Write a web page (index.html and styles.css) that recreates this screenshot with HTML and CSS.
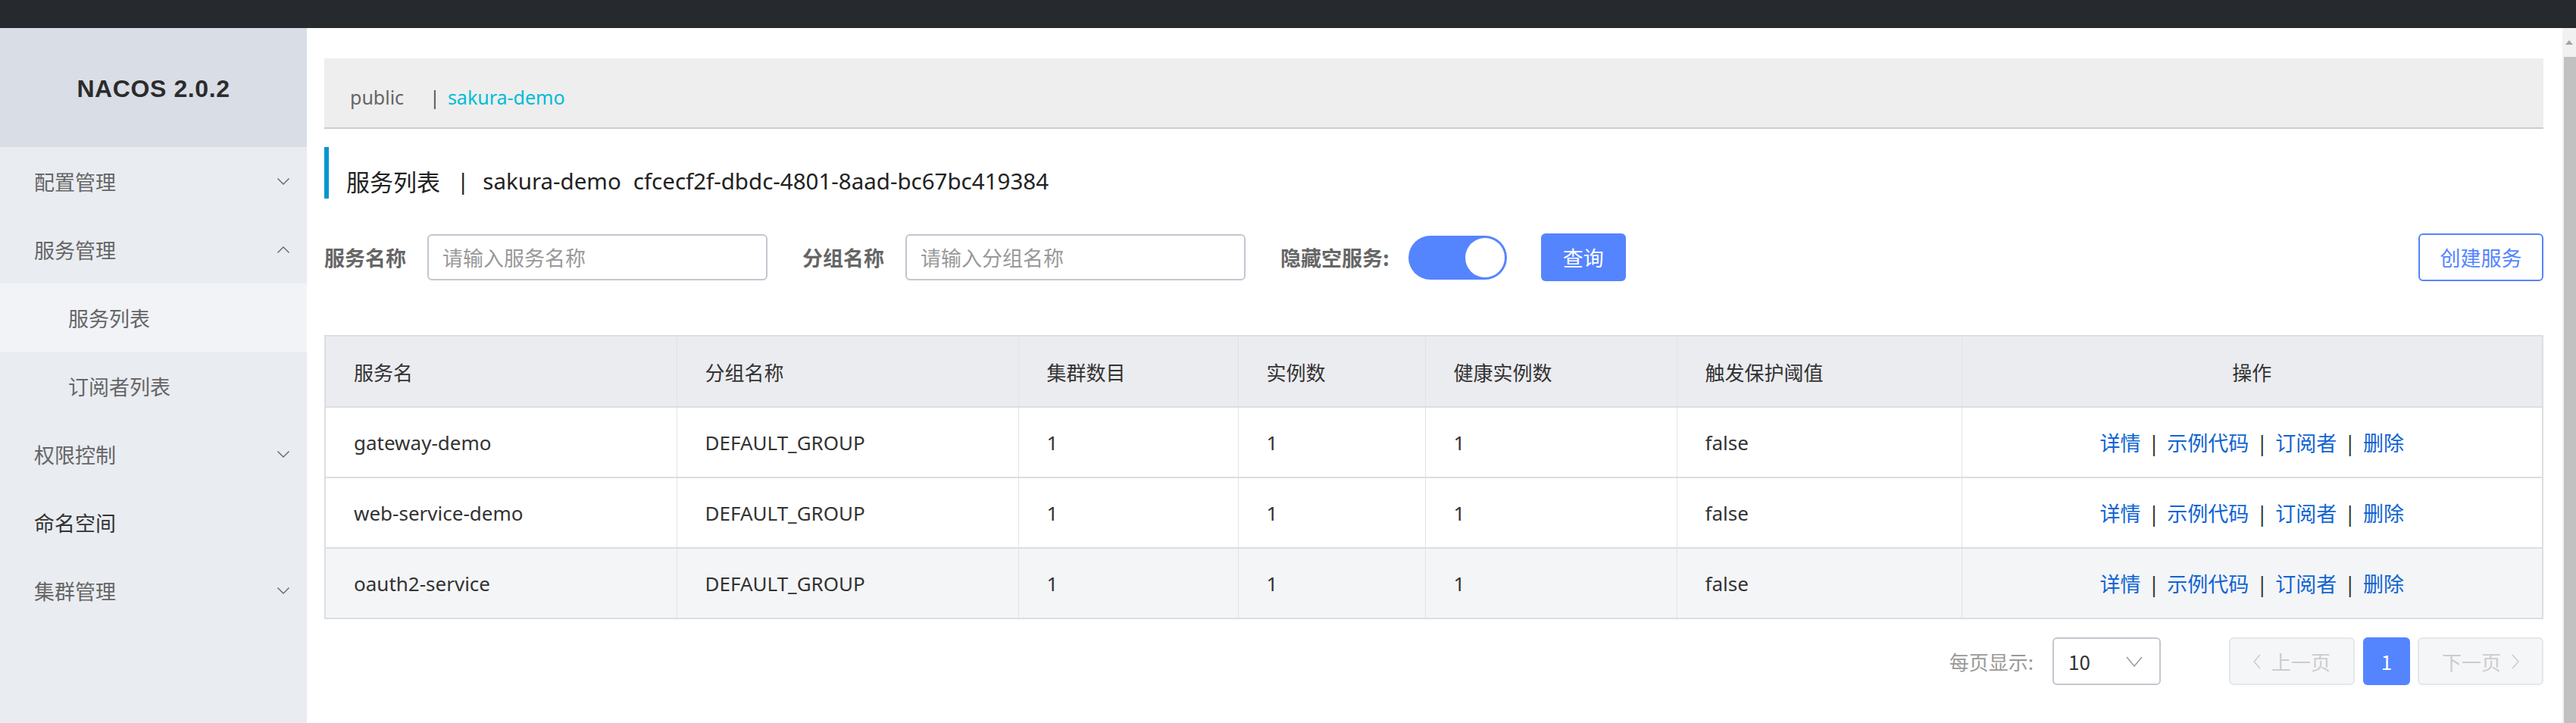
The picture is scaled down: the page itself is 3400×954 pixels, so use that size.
FILE: index.html
```html
<!DOCTYPE html>
<html lang="zh-CN">
<head>
<meta charset="utf-8">
<title>Nacos</title>
<link rel="stylesheet" href="styles.css">
</head>
<body>
<div class="topbar"></div>
<div class="app">
  <aside class="sidebar">
    <div class="brand">NACOS 2.0.2</div>
    <ul class="menu">
      <li class="menu-item"><span>配置管理</span><svg class="chev" viewBox="0 0 16 9" width="16" height="9"><polyline points="0.5,0.5 8,8 15.5,0.5"/></svg></li>
      <li class="menu-item"><span>服务管理</span><svg class="chev" viewBox="0 0 16 9" width="16" height="9"><polyline points="0.5,8.5 8,1 15.5,8.5"/></svg></li>
      <li class="sub-item active">服务列表</li>
      <li class="sub-item">订阅者列表</li>
      <li class="menu-item"><span>权限控制</span><svg class="chev" viewBox="0 0 16 9" width="16" height="9"><polyline points="0.5,0.5 8,8 15.5,0.5"/></svg></li>
      <li class="menu-item strong"><span>命名空间</span></li>
      <li class="menu-item"><span>集群管理</span><svg class="chev" viewBox="0 0 16 9" width="16" height="9"><polyline points="0.5,0.5 8,8 15.5,0.5"/></svg></li>
    </ul>
  </aside>
  <main class="main">
    <div class="ns-bar">
      <span class="ns">public</span>
      <span class="ns-sep">|</span>
      <span class="ns ns-active">sakura-demo</span>
    </div>
    <div class="page-title">
      <span class="title-cjk">服务列表</span><span class="title-sep">|</span><span>sakura-demo</span><span class="title-id">cfcecf2f-dbdc-4801-8aad-bc67bc419384</span>
    </div>
    <div class="filters">
      <span class="f-label">服务名称</span>
      <div class="f-input">请输入服务名称</div>
      <span class="f-label">分组名称</span>
      <div class="f-input">请输入分组名称</div>
      <span class="f-label f-label-switch">隐藏空服务:</span>
      <div class="switch"><div class="knob"></div></div>
      <button class="btn btn-primary">查询</button>
      <button class="btn btn-outline">创建服务</button>
    </div>
    <table class="grid">
      <colgroup>
        <col style="width:464px"><col style="width:451px"><col style="width:290px"><col style="width:247px"><col style="width:332px"><col style="width:376px"><col>
      </colgroup>
      <thead>
        <tr><th>服务名</th><th>分组名称</th><th>集群数目</th><th>实例数</th><th>健康实例数</th><th>触发保护阈值</th><th class="center">操作</th></tr>
      </thead>
      <tbody>
        <tr><td>gateway-demo</td><td>DEFAULT_GROUP</td><td>1</td><td>1</td><td>1</td><td>false</td><td class="center ops"><a>详情</a><span class="op-sep">|</span><a>示例代码</a><span class="op-sep">|</span><a>订阅者</a><span class="op-sep">|</span><a>删除</a></td></tr>
        <tr><td>web-service-demo</td><td>DEFAULT_GROUP</td><td>1</td><td>1</td><td>1</td><td>false</td><td class="center ops"><a>详情</a><span class="op-sep">|</span><a>示例代码</a><span class="op-sep">|</span><a>订阅者</a><span class="op-sep">|</span><a>删除</a></td></tr>
        <tr class="hover"><td>oauth2-service</td><td>DEFAULT_GROUP</td><td>1</td><td>1</td><td>1</td><td>false</td><td class="center ops"><a>详情</a><span class="op-sep">|</span><a>示例代码</a><span class="op-sep">|</span><a>订阅者</a><span class="op-sep">|</span><a>删除</a></td></tr>
      </tbody>
    </table>
    <div class="pager">
      <span class="p-label">每页显示:</span>
      <div class="p-select"><span>10</span><svg class="p-chev" viewBox="0 0 22 14" width="22" height="14"><polyline points="1,1 11,13 21,1"/></svg></div>
      <div class="p-btn p-disabled"><svg viewBox="0 0 10 20" width="10" height="20"><polyline points="9,1 1,10 9,19"/></svg><span>上一页</span></div>
      <div class="p-num">1</div>
      <div class="p-btn p-disabled p-next"><span>下一页</span><svg viewBox="0 0 10 20" width="10" height="20"><polyline points="1,1 9,10 1,19"/></svg></div>
    </div>
  </main>
  <div class="scrollbar">
    <div class="sb-arrow"><svg viewBox="0 0 10 6" width="10" height="6"><polygon points="0,6 5,0 10,6"/></svg></div>
    <div class="sb-thumb"></div>
  </div>
</div>
</body>
</html>
```
FILE: styles.css
```css
* { box-sizing: border-box; }
html, body { margin: 0; padding: 0; }
body {
  width: 3400px;
  height: 954px;
  overflow: hidden;
  font-family: "Noto Sans", "Noto Sans CJK SC", sans-serif;
  color: #333;
  background: #fff;
}
.topbar { height: 37px; background: #262a2f; }
.app { display: flex; height: 917px; }

/* sidebar */
.sidebar { width: 405px; flex: none; background: #e9ecf1; }
.brand {
  height: 157px;
  background: #d9dde5;
  display: flex;
  align-items: center;
  justify-content: center;
  font-family: "Liberation Sans", Arial, sans-serif;
  font-weight: bold;
  font-size: 32px;
  letter-spacing: 0.6px;
  color: #2b2b2b;
  padding-top: 3px;
}
.menu { list-style: none; margin: 0; padding: 0; }
.menu-item, .sub-item {
  height: 90px;
  display: flex;
  align-items: center;
  justify-content: space-between;
  font-size: 27px;
  color: #666;
  font-family: "Noto Sans CJK SC", sans-serif;
}
.menu-item { padding: 0 23px 0 45px; }
.menu-item.strong { color: #333; }
.sub-item { padding-left: 90px; }
.sub-item.active { background: #f1f3f7; }
.chev { fill: none; stroke: #666; stroke-width: 1.4; }

/* main */
.main { flex: 1; padding: 40px 25px 0 23px; min-width: 0; }
.ns-bar {
  height: 93px;
  background: #eee;
  border-bottom: 2px solid #cdcdcd;
  display: flex;
  align-items: center;
  padding: 10px 0 0 34px;
  font-size: 25px;
  color: #666;
}
.ns-sep { margin: 0 10px 0 34px; color: #555; }
.ns-active { color: #00bcd8; }

.page-title {
  margin-top: 24px;
  height: 68px;
  border-left: 6px solid #0096d0;
  display: flex;
  align-items: center;
  padding: 20px 0 0 23px;
  font-size: 29.5px;
  color: #222;
  font-family: "Noto Sans", "Noto Sans CJK SC", sans-serif;
}
.title-cjk { font-size: 31px; font-family: "Noto Sans CJK SC", sans-serif; }
.title-sep { margin: 0 18px 0 22px; }
.title-id { margin-left: 16px; }

.filters {
  margin-top: 46px;
  height: 63px;
  display: flex;
  align-items: center;
}
.f-label {
  font-family: "Noto Sans CJK SC", sans-serif;
  font-size: 27px;
  font-weight: bold;
  color: #666;
  margin-right: 28px;
}
.f-label-switch { margin-right: 25px; }
.f-input {
  width: 449px;
  height: 61px;
  border: 2px solid #c4c6cf;
  border-radius: 6px;
  padding-left: 18px;
  display: flex;
  align-items: center;
  font-size: 27px;
  color: #999;
  font-family: "Noto Sans CJK SC", sans-serif;
  margin-right: 46px;
}
.switch {
  width: 130px;
  height: 58px;
  border-radius: 29px;
  background: #5584ff;
  display: flex;
  align-items: center;
  justify-content: flex-end;
  padding-right: 3px;
  margin-right: 45px;
}
.knob { width: 52px; height: 52px; border-radius: 50%; background: #fff; }
.btn {
  height: 63px;
  border-radius: 6px;
  font-family: "Noto Sans CJK SC", sans-serif;
  font-size: 27px;
  padding: 0;
  cursor: pointer;
}
.btn-primary { width: 112px; background: #5584ff; border: 0; color: #fff; }
.btn-outline { width: 165px; margin-left: auto; background: #fff; border: 2px solid #5584ff; color: #5584ff; }

/* table */
.grid {
  margin-top: 71px;
  width: 100%;
  table-layout: fixed;
  border-collapse: collapse;
  border: 2px solid #dcdee3;
  font-size: 26px;
}
.grid th, .grid td {
  text-align: left;
  padding: 0 0 0 37px;
  border-left: 1px solid #e1e3e8;
  border-bottom: 2px solid #dcdee3;
  white-space: nowrap;
}
.grid th {
  height: 94px;
  background: #ebecf0;
  font-weight: normal;
  color: #333;
  font-family: "Noto Sans CJK SC", sans-serif;
}
.grid td { height: 93px; color: #333; background: #fff; }
.grid tr.hover td { background: #f4f5f7; }
.grid .center { text-align: center; padding-left: 0; }
.ops { color: #333; font-size: 27px; }
.ops a { color: #1064d2; font-family: "Noto Sans CJK SC", sans-serif; }
.op-sep { margin: 0 10px; }

/* pager */
.pager {
  margin-top: 24px;
  height: 63px;
  display: flex;
  justify-content: flex-end;
  align-items: center;
  font-size: 26px;
  font-family: "Noto Sans CJK SC", sans-serif;
}
.p-label { color: #999; margin-right: 25px; }
.p-select {
  width: 143px;
  height: 63px;
  border: 2px solid #c4c6cf;
  border-radius: 6px;
  display: flex;
  align-items: center;
  justify-content: space-between;
  padding: 0 22px 0 19px;
  color: #333;
  margin-right: 90px;
}
.p-chev { fill: none; stroke: #999; stroke-width: 1.5; }
.p-btn {
  width: 166px;
  height: 63px;
  border: 2px solid #e6e7eb;
  border-radius: 6px;
  background: #f5f6f8;
  color: #ccc;
  display: flex;
  align-items: center;
  justify-content: center;
  gap: 14px;
}
.p-btn svg { fill: none; stroke: #ccc; stroke-width: 1.6; }
.p-num {
  width: 62px;
  height: 63px;
  border-radius: 6px;
  background: #5584ff;
  color: #fff;
  display: flex;
  align-items: center;
  justify-content: center;
  margin: 0 10px 0 11px;
}

/* scrollbar */
.scrollbar { width: 18px; flex: none; background: #f1f1f1; display: flex; flex-direction: column; }
.sb-arrow { height: 38px; display: flex; justify-content: center; align-items: center; }
.sb-arrow svg { fill: #a3a3a3; }
.sb-thumb { flex: 1; background: #c1c1c1; margin-left: 2px; }
```
